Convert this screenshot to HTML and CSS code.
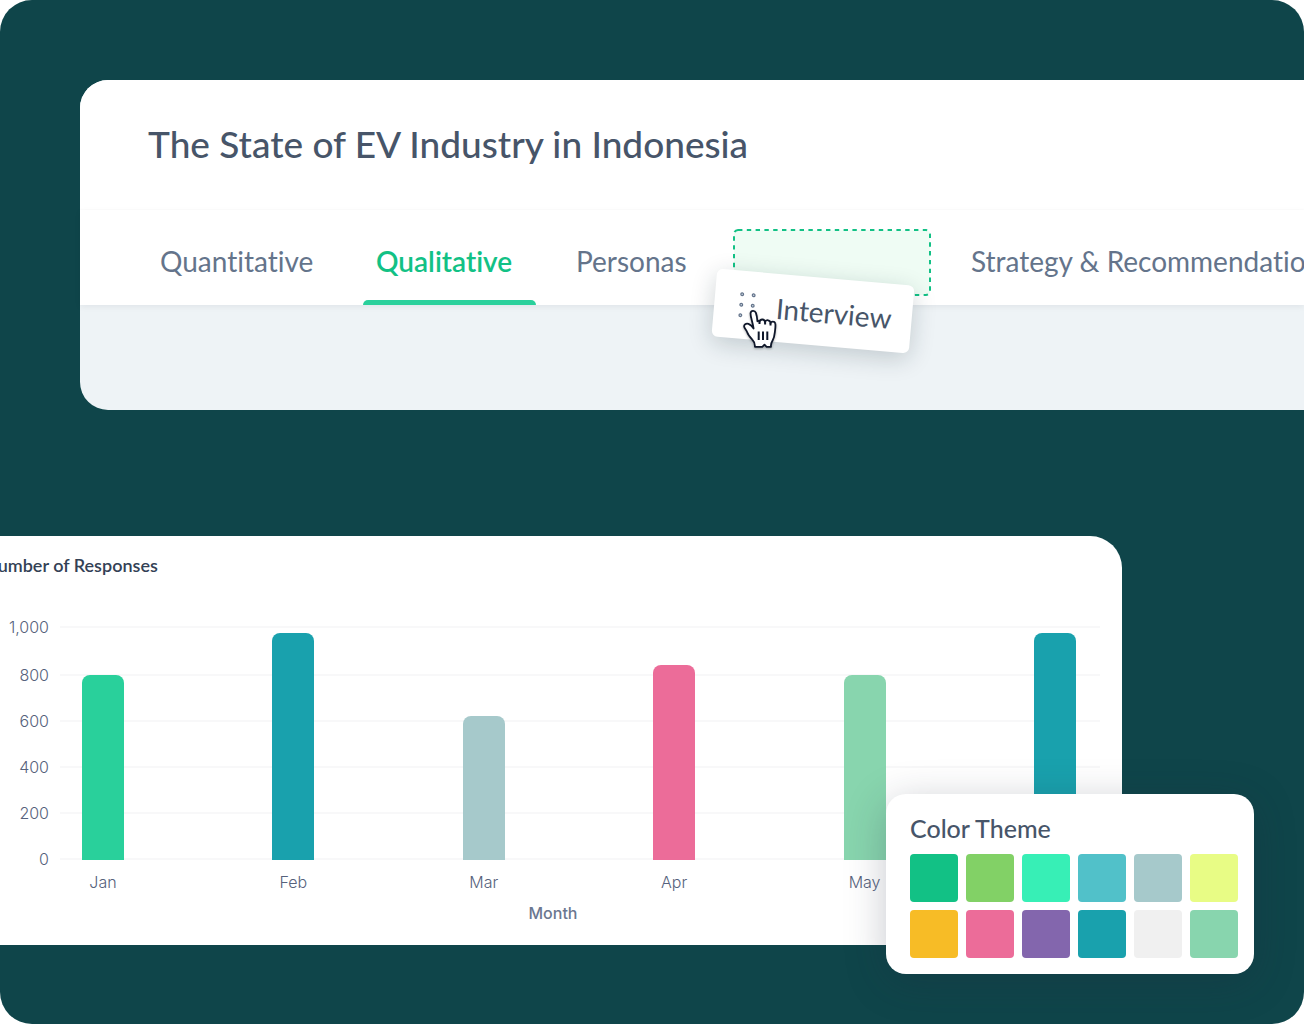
FILE: index.html
```html
<!DOCTYPE html>
<html lang="en">
<head>
<meta charset="utf-8">
<meta name="viewport" content="width=device-width, initial-scale=1">
<title>The State of EV Industry in Indonesia</title>
<link rel="stylesheet" href="styles.css">
</head>
<body>
<main class="stage">
  <section class="report">
    <header class="report-head">
      <h1 class="report-title">The State of EV Industry in Indonesia</h1>
    </header>
    <nav class="tabs">
      <button class="tab" type="button">Quantitative</button>
      <button class="tab tab-active" type="button">Qualitative</button>
      <button class="tab" type="button">Personas</button>
      <div class="slot">
        <svg class="slot-outline" aria-hidden="true"><rect class="slot-rect" x="1" y="1" rx="4"/></svg>
        <button class="drag-tab" type="button">
          <svg class="grip" width="18" height="28" viewBox="0 0 18 28" aria-hidden="true">
            <g fill="#cbd5e1" stroke="#64748b" stroke-width="1.2">
              <circle cx="3" cy="3.500" r="1.400"/><circle cx="14.500" cy="3.500" r="1.400"/>
              <circle cx="3" cy="14" r="1.400"/><circle cx="14.500" cy="14" r="1.400"/>
              <circle cx="3" cy="24.500" r="1.400"/><circle cx="14.500" cy="24.500" r="1.400"/>
            </g>
          </svg>
          Interview
        </button>
        <svg class="cursor" width="36" height="40" viewBox="0 0 36 40" aria-hidden="true">
          <path fill="#fff" stroke="#0f172a" stroke-width="1.800" stroke-linejoin="round" d="M11.600 19.500 C10.500 17.500 8.500 15.700 6.500 14.900 C4 14 1.700 15.600 2.200 17.800 C2.600 19.600 4.300 20.700 5.200 23.200 C6.200 26.300 8.300 28.500 10.300 30.600 C12.300 32.600 13.200 34 12.900 37.800 H20.300 L22.500 35.600 L24.600 37.800 H29 C28.700 35.600 29.200 33.600 30.600 31.400 C32.700 28.200 32.600 25 33.100 21 C33.500 17.800 33.700 15.800 33.200 14.200 C32.600 12 29.200 12 28.500 14.300 C28.500 10.700 23.900 10.200 23.100 13.100 C22.500 9.700 18.300 9.700 17.500 12.700 C16.900 11.600 16 11.500 15.400 12.200 C15.200 9 14.800 6.400 13.900 3.900 C12.900 1.100 9 1.200 8.600 4 C8.100 7.400 10.500 12 11.600 19.500 Z"/>
          <path fill="none" stroke="#0f172a" stroke-width="2" d="M16.700 22.600 V31 M21 22.600 V31 M25.300 22.600 V31 M28.500 14 V16.500 M23.100 13 V15.500 M17.500 12.500 V15"/>
        </svg>
      </div>
      <button class="tab" type="button">Strategy &amp; Recommendations</button>
    </nav>
    <div class="report-body"></div>
  </section>

  <section class="chart">
    <h2 class="chart-title">Number of Responses</h2>
    <div class="plot">
      <div class="scale">
        <div class="tick"><span class="tick-label">1,000</span></div>
        <div class="tick"><span class="tick-label">800</span></div>
        <div class="tick"><span class="tick-label">600</span></div>
        <div class="tick"><span class="tick-label">400</span></div>
        <div class="tick"><span class="tick-label">200</span></div>
        <div class="tick"><span class="tick-label">0</span></div>
      </div>
      <div class="bars">
        <div class="month"><div class="bar green" style="height:185px"></div><span>Jan</span></div>
        <div class="month"><div class="bar teal" style="height:227px"></div><span>Feb</span></div>
        <div class="month"><div class="bar mist" style="height:144px"></div><span>Mar</span></div>
        <div class="month"><div class="bar pink" style="height:195px"></div><span>Apr</span></div>
        <div class="month"><div class="bar sage" style="height:185px"></div><span>May</span></div>
        <div class="month"><div class="bar teal" style="height:227px"></div><span></span></div>
      </div>
    </div>
    <p class="axis-title">Month</p>
  </section>

  <aside class="theme">
    <h2 class="theme-title">Color Theme</h2>
    <div class="swatches">
      <button class="swatch emerald" type="button" aria-label="Emerald"></button>
      <button class="swatch leaf" type="button" aria-label="Leaf"></button>
      <button class="swatch mint" type="button" aria-label="Mint"></button>
      <button class="swatch sky" type="button" aria-label="Sky"></button>
      <button class="swatch mist" type="button" aria-label="Mist"></button>
      <button class="swatch lime" type="button" aria-label="Lime"></button>
      <button class="swatch amber" type="button" aria-label="Amber"></button>
      <button class="swatch pink" type="button" aria-label="Pink"></button>
      <button class="swatch purple" type="button" aria-label="Purple"></button>
      <button class="swatch teal" type="button" aria-label="Teal"></button>
      <button class="swatch light" type="button" aria-label="Light"></button>
      <button class="swatch sage" type="button" aria-label="Sage"></button>
    </div>
  </aside>
</main>
</body>
</html>
```
FILE: styles.css
```css
* { box-sizing: border-box; }

body {
  margin: 0;
  background: #fff;
  font-family: Lato, "Open Sans", sans-serif;
  font-variant-ligatures: none;
  color: #475569;
}

button {
  border: 0;
  margin: 0;
  padding: 0;
  background: none;
  font: inherit;
  font-variant-ligatures: none;
  color: inherit;
  cursor: pointer;
}

h1, h2, p { margin: 0; }

.stage {
  position: relative;
  overflow: hidden;
  min-height: 100vh;
  padding: 80px 0 64px;
  border-radius: 32px;
  background: #0f454a;
}

/* Report card with tabs */
.report {
  margin-left: 80px;
  border-radius: 28px 0 0 28px;
  background: #eef3f6;
}

.report-head {
  padding: 42px 68px 43px;
  border-radius: 28px 0 0 0;
  border-bottom: 1px solid #fdfdfd;
  background: #fff;
}

.report-title {
  font-size: 37px;
  line-height: 44px;
  font-weight: 500;
}

.tabs {
  display: grid;
  grid-template-columns: 189px 173px 143px 198px max-content;
  column-gap: 27px;
  height: 95px;
  padding-left: 67px;
  background: #fff;
  box-shadow: 0 2px 6px rgba(15, 23, 42, 0.06);
}

.tab {
  position: relative;
  padding: 28px 8px 22px 13px;
  font-size: 28px;
  line-height: 40px;
  text-align: left;
  white-space: nowrap;
  color: #64748b;
}

.tab-active {
  font-weight: 600;
  color: #12c185;
}

.tab-active::after {
  content: "";
  position: absolute;
  left: 0;
  right: 0;
  bottom: 0;
  height: 5px;
  border-radius: 5px 5px 0 0;
  background: #2bd09c;
}

.report-body { height: 105px; }

.slot {
  position: relative;
  height: 67px;
  margin-top: 19px;
}

.slot-outline {
  display: block;
  width: 100%;
  height: 100%;
}

.slot-rect {
  width: calc(100% - 2px);
  height: calc(100% - 2px);
  fill: #effcf4;
  stroke: #12c185;
  stroke-width: 2px;
  stroke-dasharray: 4.4 4.4;
}

.drag-tab {
  position: absolute;
  left: -19px;
  top: 48px;
  display: flex;
  align-items: center;
  gap: 20px;
  width: 198px;
  height: 68px;
  padding-left: 24px;
  border-radius: 6px;
  background: #fff;
  box-shadow: 0 6px 24px rgba(15, 40, 50, 0.2);
  font-size: 28px;
  line-height: 36px;
  transform: rotate(5deg);
}

.cursor {
  position: absolute;
  left: 9px;
  top: 80px;
  filter: drop-shadow(0 1px 1px rgba(0, 0, 0, 0.3));
}

/* Bar chart card */
.chart {
  margin: 126px 182px 0 -16px;
  padding: 20px 0 22px;
  border-radius: 0 32px 0 0;
  background: #fff;
}

.chart-title {
  font-size: 18px;
  line-height: 18px;
  font-weight: 600;
  color: #334155;
}

.plot {
  display: grid;
  padding: 43px 22px 0 16px;
  font: 300 16px/20px Inter, sans-serif;
  color: #56627c;
}

.scale, .bars { grid-area: 1 / 1; }

.scale { height: 275px; }

.tick {
  display: flex;
  align-items: center;
  gap: 11px;
  height: 20px;
  margin-bottom: 26px;
}

.tick:first-child { margin-bottom: 28px; }

.tick::after {
  content: "";
  flex: 1;
  height: 2px;
  background: #f8f8f9;
}

.tick-label {
  width: 49px;
  text-align: right;
}

.bars {
  display: flex;
  justify-content: space-between;
  align-items: flex-end;
  padding: 0 24px 0 82px;
}

.month {
  display: flex;
  flex-direction: column;
  align-items: center;
  gap: 12px;
  width: 42px;
}

.month span { height: 20px; }

.bar {
  width: 100%;
  border-radius: 8px 8px 0 0;
}

.axis-title {
  padding-top: 11px;
  font: 500 16px/20px Inter, sans-serif;
  text-align: center;
  color: #6b7790;
}

/* Colour palette panel */
.theme {
  position: absolute;
  right: 50px;
  bottom: 50px;
  padding: 16px 16px 16px 24px;
  border-radius: 20px;
  background: #fff;
  box-shadow: 0 8px 40px rgba(30, 41, 59, 0.25);
}

.theme-title {
  margin-bottom: 8px;
  font-size: 25px;
  line-height: 36px;
  font-weight: 500;
}

.swatches {
  display: grid;
  grid-template-columns: repeat(6, 48px);
  gap: 8px;
}

.swatch {
  height: 48px;
  border-radius: 4px;
}

.green { background: #29d09b; }
.emerald { background: #12c185; }
.leaf { background: #82d166; }
.mint { background: #37efb6; }
.sky { background: #51c1c9; }
.mist { background: #a6c9cb; }
.lime { background: #e8fc85; }
.amber { background: #f7bc26; }
.pink { background: #ec6c99; }
.purple { background: #8366ad; }
.teal { background: #19a1ad; }
.light { background: #f0f0f0; }
.sage { background: #88d5ae; }
```
